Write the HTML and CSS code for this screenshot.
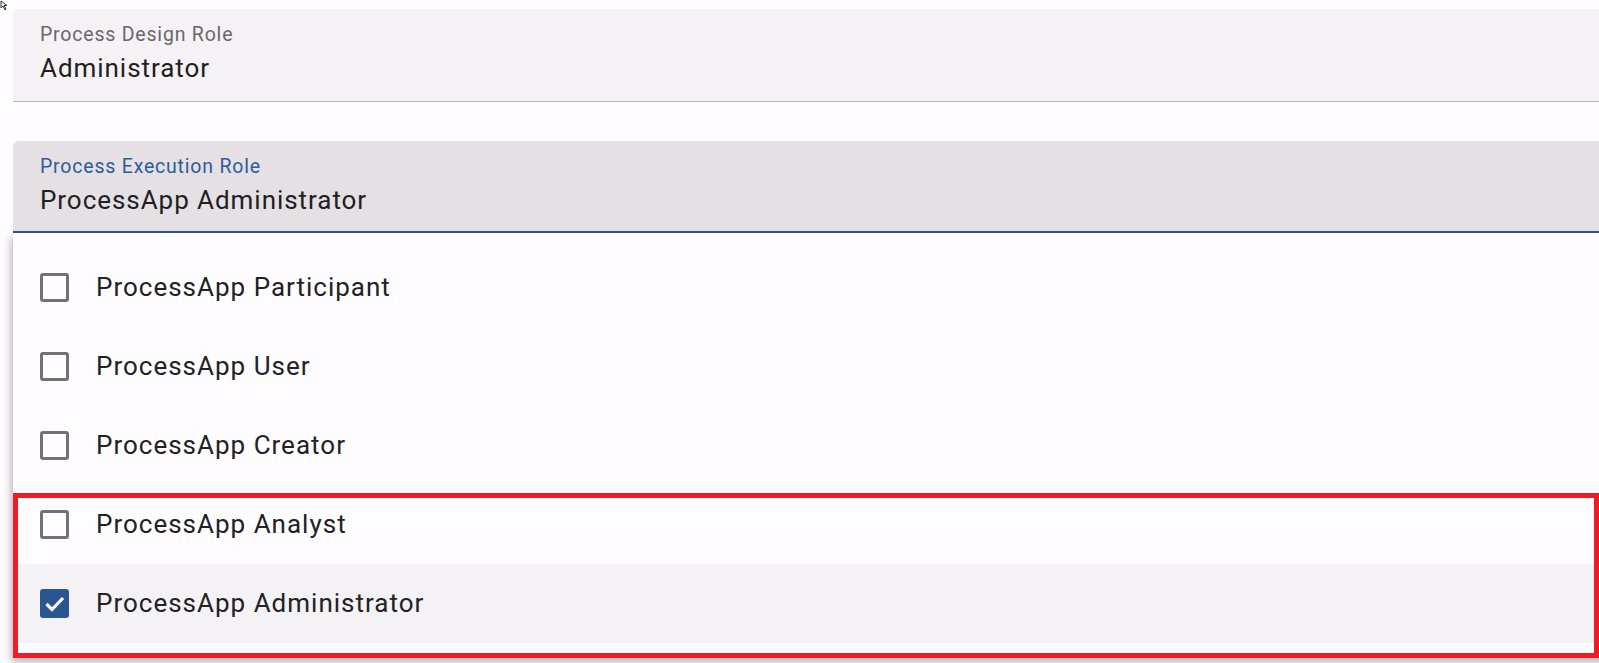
FILE: index.html
```html
<!DOCTYPE html>
<html>
<head>
<meta charset="utf-8">
<link rel="stylesheet" href="styles.css">
</head>
<body>
<div class="page">
  <svg class="cursor" width="8" height="11" viewBox="0 0 8 11"><path d="M1 1 L1 8 L3 6 L5 10 L6 9 L4 5.5 L7 5.5 Z" fill="none" stroke="#333" stroke-width="1"/></svg>
  <div class="field field-idle">
    <div class="label">Process Design Role</div>
    <div class="value">Administrator</div>
  </div>
  <div class="field field-focus">
    <div class="label label-focus">Process Execution Role</div>
    <div class="value">ProcessApp Administrator</div>
  </div>
  <div class="panel">
    <div class="option"><span class="box"></span><span class="text">ProcessApp Participant</span></div>
    <div class="option"><span class="box"></span><span class="text">ProcessApp User</span></div>
    <div class="option"><span class="box"></span><span class="text">ProcessApp Creator</span></div>
    <div class="option"><span class="box"></span><span class="text">ProcessApp Analyst</span></div>
    <div class="option option-selected"><span class="box box-checked"><svg width="29" height="29" viewBox="0 0 29 29"><path d="M6.5 15 L12 20.5 L23 9" fill="none" stroke="#fff" stroke-width="3.2"/></svg></span><span class="text">ProcessApp Administrator</span></div>
  </div>
  <div class="highlight"></div>
</div>
</body>
</html>
```
FILE: styles.css
```css
html, body {
  margin: 0;
  padding: 0;
  background: #fefcfe;
  overflow: hidden;
}
body {
  width: 1599px;
  height: 663px;
  font-family: Roboto, "Liberation Sans", sans-serif;
}
.page {
  position: relative;
  padding: 9px 0 0 13px;
  height: 663px;
  box-sizing: border-box;
}
.cursor {
  position: absolute;
  left: 0;
  top: 0;
}
.field {
  box-sizing: border-box;
  height: 93px;
  width: calc(100% + 20px);
  border-radius: 6px 6px 0 0;
  padding: 13.5px 0 0 27px;
}
.field-idle {
  background: #f5f1f4;
  border-bottom: 1.5px solid #bbb8bc;
}
.field-focus {
  margin-top: 39px;
  height: 92px;
  background: #e4e0e3;
  border-bottom: 2.5px solid #2b5592;
}
.label {
  font-size: 19.5px;
  line-height: 23px;
  letter-spacing: 0.8px;
  color: #6a676d;
}
.label-focus {
  color: #2e5c99;
}
.value {
  margin-top: 7px;
  font-size: 26px;
  line-height: 30px;
  letter-spacing: 0.95px;
  color: #201f23;
}
.panel {
  width: calc(100% + 20px);
  background: #fffcff;
  padding: 15px 0 15px 0;
  box-shadow: -2px 4px 8px rgba(0, 0, 0, 0.28);
}
.option {
  height: 79px;
  display: flex;
  align-items: center;
  padding-left: 27px;
}
.option-selected {
  background: #f4f2f4;
}
.box {
  box-sizing: border-box;
  width: 29px;
  height: 29px;
  border: 3px solid #747175;
  border-radius: 3px;
  flex: none;
  position: relative;
}
.box-checked {
  background: #2b5590;
  border-color: #2b5590;
}
.box-checked svg {
  position: absolute;
  left: -3px;
  top: -3px;
}
.text {
  margin-left: 27px;
  font-size: 26px;
  line-height: 30px;
  margin-top: -2px;
  letter-spacing: 1px;
  color: #222126;
}
.highlight {
  position: absolute;
  left: 13px;
  top: 493px;
  width: 1586px;
  height: 165px;
  box-sizing: border-box;
  border: 5px solid #ee1c25;
}
```
